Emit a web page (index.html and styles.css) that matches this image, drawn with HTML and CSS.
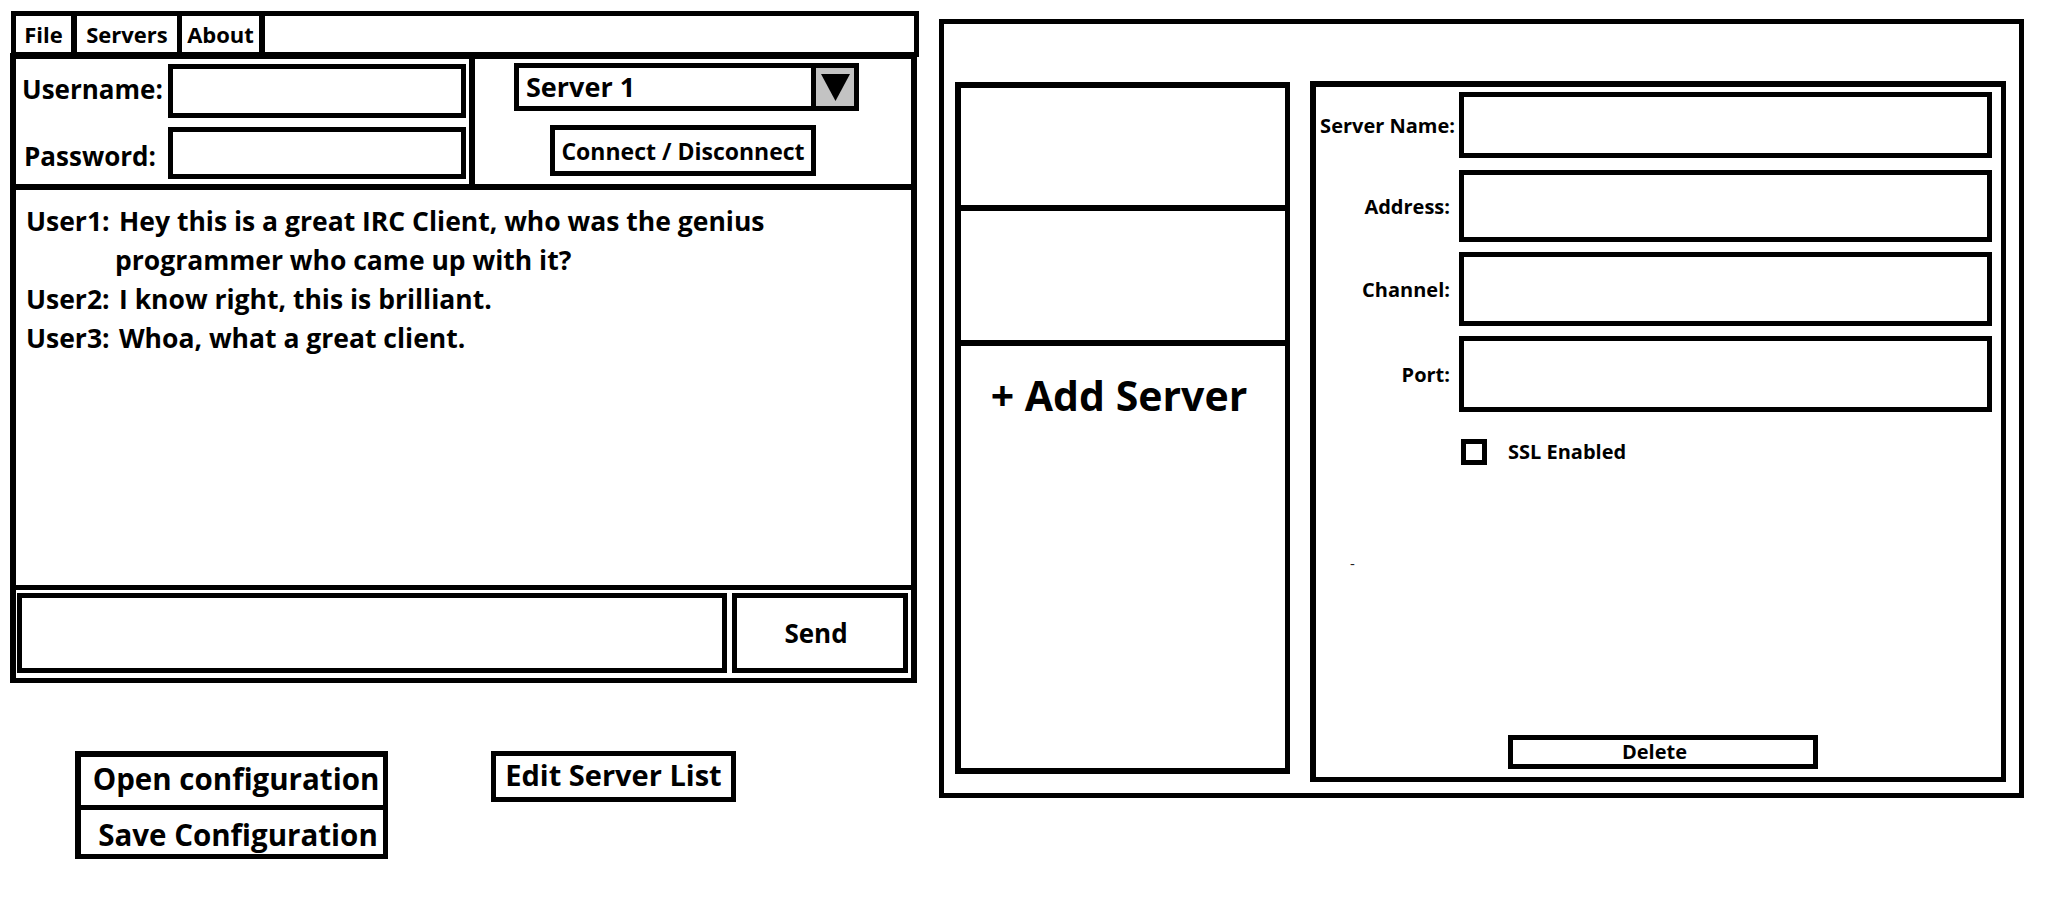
FILE: index.html
```html
<!DOCTYPE html>
<html lang="en">
<head>
<meta charset="utf-8">
<title>IRC Client Wireframe</title>
<link rel="stylesheet" href="styles.css">
</head>
<body>
<div class="page">
  <div class="client">
    <div class="menubar">
      <div class="menu-item menu-file">File</div>
      <div class="menu-item menu-servers">Servers</div>
      <div class="menu-item menu-about">About</div>
    </div>
    <div class="frame">
      <div class="login-row">
        <div class="creds">
          <div class="cred-row">
            <span class="cred-label cred-label-user">Username:</span>
            <div class="box input-user"></div>
          </div>
          <div class="cred-row">
            <span class="cred-label cred-label-pass">Password:</span>
            <div class="box input-pass"></div>
          </div>
        </div>
        <div class="server-pick">
          <div class="dropdown">
            <span class="dropdown-text">Server 1</span>
            <span class="dropdown-btn">
              <svg width="29" height="27" viewBox="0 0 29 27"><polygon points="0,0 29,0 14.5,27" fill="#000"/></svg>
            </span>
          </div>
          <div class="box btn-connect">Connect / Disconnect</div>
        </div>
      </div>
      <div class="chat">
        <div class="msg"><span class="msg-user">User1:</span><span class="msg-text">Hey this is a great IRC Client, who was the genius<br><span class="msg-cont">programmer who came up with it?</span></span></div>
        <div class="msg"><span class="msg-user">User2:</span><span class="msg-text">I know right, this is brilliant.</span></div>
        <div class="msg"><span class="msg-user">User3:</span><span class="msg-text">Whoa, what a great client.</span></div>
      </div>
      <div class="compose">
        <div class="box compose-input"></div>
        <div class="box btn-send">Send</div>
      </div>
    </div>
    <div class="actions">
      <div class="config-group">
        <div class="config-btn config-open">Open configuration</div>
        <div class="config-btn config-save">Save Configuration</div>
      </div>
      <div class="box btn-edit">Edit Server List</div>
    </div>
  </div>

  <div class="editor-window">
    <div class="server-list">
      <div class="server-item server-item-1"></div>
      <div class="server-item server-item-2"></div>
      <div class="server-item server-add">+ Add Server</div>
    </div>
    <div class="server-form">
      <div class="field field-name">
        <span class="field-label">Server Name:</span>
        <div class="box field-input"></div>
      </div>
      <div class="field field-address">
        <span class="field-label">Address:</span>
        <div class="box field-input"></div>
      </div>
      <div class="field field-channel">
        <span class="field-label">Channel:</span>
        <div class="box field-input"></div>
      </div>
      <div class="field field-port">
        <span class="field-label">Port:</span>
        <div class="box field-input"></div>
      </div>
      <div class="ssl-row">
        <span class="checkbox"></span>
        <span class="ssl-label">SSL Enabled</span>
      </div>
      <div class="stray-dash">-</div>
      <div class="box btn-delete">Delete</div>
    </div>
  </div>
</div>
</body>
</html>
```

FILE: styles.css
```css
* {
  box-sizing: border-box;
}

html, body {
  margin: 0;
  padding: 0;
  background: #fff;
}

body {
  font-family: "Open Sans", "Noto Sans", sans-serif;
  font-weight: 700;
  color: #000;
  width: 2048px;
  height: 906px;
  overflow: hidden;
}

.page {
  display: flex;
  align-items: flex-start;
  padding: 11px 0 0 10px;
}

.box {
  border: 5px solid #000;
  background: #fff;
}

/* ---------- Left: IRC client ---------- */
.client {
  width: 909px;
  display: flex;
  flex-direction: column;
}

.menubar {
  margin-left: 1px;
  width: 908px;
  height: 46px;
  border: 5px solid #000;
  display: flex;
}

.menu-item {
  display: flex;
  align-items: center;
  justify-content: center;
  font-size: 22px;
  height: 100%;
  border-right: 6px solid #000;
}

.menu-file { width: 61px; }
.menu-servers { width: 105px; border-right-width: 5px; }
.menu-about { width: 83px; }

.frame {
  margin-top: -4px;
  width: 907px;
  height: 630px;
  border: 6px solid #000;
  border-bottom-width: 5px;
  display: flex;
  flex-direction: column;
}

.login-row {
  display: flex;
  height: 131px;
  border-bottom: 6px solid #000;
}

.creds {
  width: 459px;
  border-right: 6px solid #000;
  padding: 5px 0 0 6px;
  display: flex;
  flex-direction: column;
  gap: 9px;
}

.cred-row {
  display: flex;
  align-items: center;
}

.cred-label {
  width: 146px;
  font-size: 26px;
  line-height: 1;
}

.cred-label-user {
  padding-bottom: 5px;
}

.cred-label-pass {
  padding-left: 2px;
  padding-top: 6px;
}

.input-user {
  width: 298px;
  height: 54px;
}

.input-pass {
  width: 298px;
  height: 52px;
}

.server-pick {
  flex: 1;
  padding: 4px 0 0 39px;
  display: flex;
  flex-direction: column;
  align-items: flex-start;
}

.dropdown {
  width: 345px;
  height: 48px;
  border: 5px solid #000;
  display: flex;
  align-items: stretch;
}

.dropdown-text {
  flex: 1;
  font-size: 27px;
  line-height: 38px;
  padding-left: 7px;
}

.dropdown-btn {
  width: 43px;
  background: #c3c3c3;
  border-left: 5px solid #000;
  display: flex;
  align-items: center;
  justify-content: center;
}

.btn-connect {
  margin: 14px 0 0 36px;
  width: 266px;
  height: 51px;
  font-size: 23px;
  display: flex;
  align-items: center;
  justify-content: center;
}

.chat {
  height: 400px;
  border-bottom: 5px solid #000;
  padding: 12px 10px;
  font-size: 26.5px;
  line-height: 39px;
}

.msg {
  display: flex;
}

.msg-user {
  width: 93px;
  flex: none;
}

.msg-text {
  white-space: nowrap;
}

.msg-cont {
  margin-left: -4px;
}

.compose {
  flex: 1;
  display: flex;
  gap: 5px;
  padding: 3px 3px 5px 1px;
}

.compose-input {
  width: 710px;
  height: 80px;
}

.btn-send {
  width: 176px;
  height: 80px;
  font-size: 26px;
  display: flex;
  align-items: center;
  justify-content: center;
  padding-right: 8px;
}

.actions {
  display: flex;
  align-items: flex-start;
  margin-top: 68px;
  padding-left: 65px;
}

.config-group {
  width: 313px;
  border: 6px solid #000;
  border-bottom-width: 5px;
  border-right-width: 5px;
  display: flex;
  flex-direction: column;
}

.config-btn {
  font-size: 29.5px;
  display: flex;
  align-items: center;
  justify-content: center;
  padding-left: 8px;
}

.config-open {
  height: 53px;
  border-bottom: 5px solid #000;
  padding-bottom: 6px;
}

.config-save {
  height: 44px;
  padding-top: 4px;
  padding-left: 12px;
}

.btn-edit {
  margin-left: 103px;
  width: 245px;
  height: 51px;
  font-size: 29px;
  display: flex;
  align-items: center;
  justify-content: center;
  padding-bottom: 5px;
}

/* ---------- Right: server editor window ---------- */
.editor-window {
  margin: 8px 0 0 20px;
  width: 1085px;
  height: 779px;
  border: 5px solid #000;
  display: flex;
  align-items: flex-start;
  padding: 58px 0 0 11px;
}

.server-list {
  width: 335px;
  height: 692px;
  border: 6px solid #000;
  border-right-width: 5px;
  display: flex;
  flex-direction: column;
}

.server-item {
  flex: none;
}

.server-item-1 {
  height: 123px;
  border-bottom: 6px solid #000;
}

.server-item-2 {
  height: 135px;
  border-bottom: 6px solid #000;
}

.server-add {
  flex: 1;
  font-size: 41px;
  line-height: 1.2;
  text-align: center;
  padding: 25px 8px 0 0;
}

.server-form {
  margin: -1px 0 0 20px;
  width: 696px;
  height: 701px;
  border: 5px solid #000;
  border-left-width: 6px;
  border-top-width: 6px;
  display: flex;
  flex-direction: column;
  padding-top: 5px;
}

.field {
  display: flex;
  align-items: center;
}

.field + .field {
  margin-top: 10px;
}

.field-address {
  margin-top: 12px !important;
}

.field-label {
  width: 143px;
  padding-right: 9px;
  text-align: right;
  font-size: 20px;
  white-space: nowrap;
}

.field-name .field-label {
  padding-right: 4px;
}

.field-input {
  width: 533px;
  height: 100%;
}

.field-name { height: 66px; }
.field-address { height: 72px; }
.field-channel { height: 74px; }
.field-port { height: 76px; }

.ssl-row {
  display: flex;
  align-items: center;
  margin: 26px 0 0 145px;
}

.checkbox {
  width: 26px;
  height: 26px;
  border: 5px solid #000;
}

.ssl-label {
  margin-left: 21px;
  font-size: 20px;
}

.stray-dash {
  margin: 90px 0 0 34px;
  font-size: 15px;
  font-weight: 400;
  line-height: 16px;
  color: #222;
}

.btn-delete {
  margin: auto 0 8px 192px;
  width: 310px;
  height: 34px;
  font-size: 20px;
  line-height: 1;
  display: flex;
  align-items: center;
  justify-content: center;
  padding-right: 17px;
}
```
